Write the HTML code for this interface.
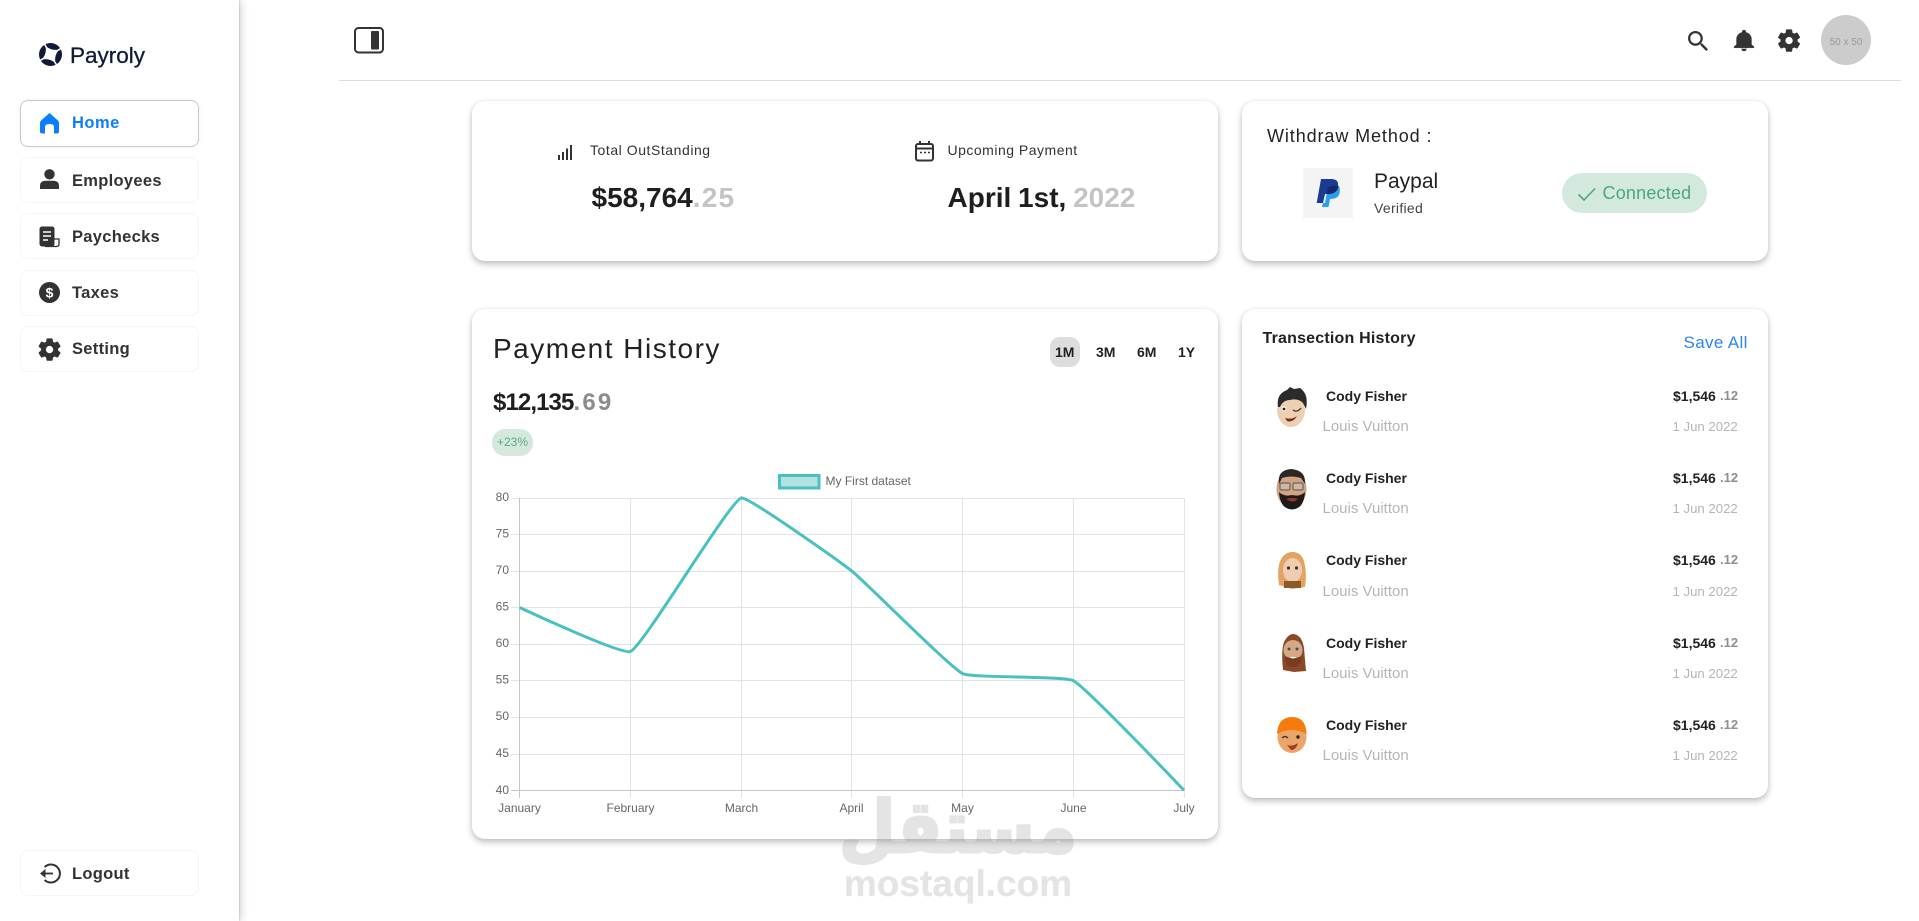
<!DOCTYPE html>
<html lang="en"><head><meta charset="utf-8"><title>Payroly</title>
<style>
*{box-sizing:border-box;margin:0;padding:0}
html,body{width:1919px;height:921px;overflow:hidden;background:#fff;font-family:"Liberation Sans",sans-serif;color:#222}
.a{position:absolute}
.t{position:absolute;white-space:nowrap;line-height:20px;height:20px}
.side{left:0;top:0;width:239px;height:921px;background:#fff;box-shadow:1px 0 1px rgba(0,0,0,.12),3px 0 8px rgba(0,0,0,.14)}
.nav{left:20px;width:179px;background:#fff;border:1px solid #f5f5f5;border-radius:8px}
.nav.on{border:1px solid #c8c8c8;box-shadow:0 0 5px rgba(0,0,0,.05)}
.nt{left:72px;font-size:16.5px;font-weight:700;color:#333;letter-spacing:.3px}
.card{background:#fff;border-radius:13px;box-shadow:0 3px 7px rgba(0,0,0,.26),0 0 3px rgba(0,0,0,.06)}
.b{font-weight:700}
.n{left:1326px;font-size:14px;font-weight:700;color:#222}
.s{left:1322.5px;font-size:15px;color:#b5b5b5}
.m{left:1673px;font-size:14px;font-weight:700;color:#222}
.c{left:1720px;font-size:13px;font-weight:700;color:#8f8f8f}
.d{left:1672.5px;font-size:13.2px;color:#b5b5b5}
svg{position:absolute;left:0;top:0;overflow:visible}
</style></head><body>
<div class="a side"></div>
<div class="a" style="left:339px;top:80px;width:1562px;height:1px;background:#dcdcdc"></div>

<div class="a nav on" style="top:100px;height:47px"></div>
<div class="a nav" style="top:157px;height:46px"></div>
<div class="a nav" style="top:213px;height:46px"></div>
<div class="a nav" style="top:270px;height:46px"></div>
<div class="a nav" style="top:326px;height:46px"></div>
<div class="a nav" style="top:850px;height:46px"></div>

<div class="t" style="left:70px;top:46px;font-size:22.5px;color:#101a38;-webkit-text-stroke:.3px #101a38">Payroly</div>
<div class="t nt" style="top:113px;color:#0b7dff;letter-spacing:.5px">Home</div>
<div class="t nt" style="top:171px">Employees</div>
<div class="t nt" style="top:227px">Paychecks</div>
<div class="t nt" style="top:283px">Taxes</div>
<div class="t nt" style="top:339px">Setting</div>
<div class="t nt" style="top:864px">Logout</div>

<div class="a card" style="left:472px;top:101px;width:746px;height:160px"></div>
<div class="a card" style="left:1242px;top:101px;width:526px;height:160px"></div>
<div class="a card" style="left:472px;top:309px;width:746px;height:530px"></div>
<div class="a card" style="left:1242px;top:309px;width:526px;height:489px"></div>

<div class="t" style="left:590px;top:140px;font-size:14px;letter-spacing:.55px;color:#333">Total OutStanding</div>
<div class="t" style="left:947.5px;top:140px;font-size:14px;letter-spacing:.5px;color:#333">Upcoming Payment</div>
<div class="t b" style="left:591.5px;top:188px;font-size:28px;color:#1e1e1e">$58,764<span style="color:#c4c4c4;letter-spacing:1.2px">.25</span></div>
<div class="t b" style="left:947.5px;top:188px;font-size:28px;color:#1e1e1e;word-spacing:-1px">April 1st, <span style="color:#c4c4c4">2022</span></div>

<div class="t" style="left:1267px;top:126px;font-size:18px;letter-spacing:.9px;color:#222">Withdraw Method :</div>
<div class="a" style="left:1303px;top:168px;width:50px;height:50px;background:#f4f4f4"></div>
<div class="t" style="left:1374px;top:172px;font-size:21px;color:#222">Paypal</div>
<div class="t" style="left:1374px;top:198px;font-size:14px;letter-spacing:.3px;color:#444">Verified</div>
<div class="a" style="left:1562px;top:173px;width:145px;height:40px;background:#d4e9de;border-radius:20px"></div>
<div class="t" style="left:1602.5px;top:183px;font-size:18px;letter-spacing:.2px;color:#4aa87e">Connected</div>

<div class="t" style="left:493px;top:339px;font-size:28px;letter-spacing:1.5px;color:#222">Payment History</div>
<div class="a" style="left:1050px;top:337px;width:30px;height:30px;background:#ddd;border-radius:10px"></div>
<div class="t b" style="left:1055px;top:342px;font-size:14px">1M</div>
<div class="t b" style="left:1096px;top:342px;font-size:14px">3M</div>
<div class="t b" style="left:1137px;top:342px;font-size:14px">6M</div>
<div class="t b" style="left:1178px;top:342px;font-size:14px">1Y</div>
<div class="t b" style="left:493px;top:393px;font-size:24px;letter-spacing:-.9px;color:#1e1e1e">$12,135<span style="color:#8c8c8c;letter-spacing:2.2px">.69</span></div>
<div class="a" style="left:492px;top:429px;width:41px;height:27px;background:#d4e9de;border-radius:13px"></div>
<div class="t" style="left:497px;top:432px;font-size:12px;color:#5fa688">+23%</div>

<div class="t b" style="left:1262.5px;top:329px;font-size:16px;letter-spacing:.2px;color:#222">Transection History</div>
<div class="t" style="left:1683.5px;top:333px;font-size:17px;letter-spacing:.35px;color:#2a86f0">Save All</div>

<div class="t n" style="top:386px">Cody Fisher</div><div class="t s" style="top:417px">Louis Vuitton</div><div class="t m" style="top:386px">$1,546</div><div class="t c" style="top:386px">.12</div><div class="t d" style="top:417px">1 Jun 2022</div>
<div class="t n" style="top:468px">Cody Fisher</div><div class="t s" style="top:499px">Louis Vuitton</div><div class="t m" style="top:468px">$1,546</div><div class="t c" style="top:468px">.12</div><div class="t d" style="top:499px">1 Jun 2022</div>
<div class="t n" style="top:550px">Cody Fisher</div><div class="t s" style="top:582px">Louis Vuitton</div><div class="t m" style="top:550px">$1,546</div><div class="t c" style="top:550px">.12</div><div class="t d" style="top:582px">1 Jun 2022</div>
<div class="t n" style="top:633px">Cody Fisher</div><div class="t s" style="top:664px">Louis Vuitton</div><div class="t m" style="top:633px">$1,546</div><div class="t c" style="top:633px">.12</div><div class="t d" style="top:664px">1 Jun 2022</div>
<div class="t n" style="top:715px">Cody Fisher</div><div class="t s" style="top:746px">Louis Vuitton</div><div class="t m" style="top:715px">$1,546</div><div class="t c" style="top:715px">.12</div><div class="t d" style="top:746px">1 Jun 2022</div>

<svg width="1919" height="921" viewBox="0 0 1919 921" xmlns="http://www.w3.org/2000/svg">
<!-- logo -->
<circle cx="50.5" cy="54.5" r="11.5" fill="#101a38"/>
<g transform="translate(50.5 54.5) rotate(15)" fill="#fff" stroke="#fff">
<path d="M-6.5-6.5Q0-3.5 6.5-6.5 3.5 0 6.5 6.5 0 3.5-6.5 6.5-3.5 0-6.5-6.5Z" stroke-width=".5"/>
<path d="M-6-6-9-9M6-6 9-9M6 6 9 9M-6 6-9 9" stroke-width="1.6"/>
</g>
<!-- home -->
<path d="M49.5 113L58 120.5Q59 121.5 59 123V131.5Q59 133.5 57 133.5H54V127Q54 124 49.5 124Q45 124 45 127V133.5H42Q40 133.5 40 131.5V123Q40 121.5 41 120.5Z" fill="#0b7dff"/>
<!-- person -->
<circle cx="49.5" cy="174.3" r="5.2" fill="#333"/><path d="M40 189V186Q40 180.8 46 180.8H53Q59 180.8 59 186V189Z" fill="#333"/>
<!-- paycheck -->
<rect x="39.5" y="226.5" width="15" height="20" rx="2.5" fill="#333"/>
<path d="M43 232H51M43 236H51M43 240H48" stroke="#fff" stroke-width="1.4"/>
<path d="M54 239H59V244Q59 246.5 56.5 246.5H45" fill="none" stroke="#333" stroke-width="1.3"/>
<!-- taxes -->
<circle cx="49.5" cy="292.5" r="10.5" fill="#333"/>
<text x="49.5" y="297.5" text-anchor="middle" font-family="Liberation Sans" font-weight="700" font-size="14" fill="#fff">$</text>
<!-- gears -->
<path transform="translate(36 336) scale(1.13)" fill="#333" stroke="#333" stroke-width=".7" d="M19.14 12.94c.04-.3.06-.61.06-.94 0-.32-.02-.64-.07-.94l2.03-1.58c.18-.14.23-.41.12-.61l-1.92-3.32c-.12-.22-.37-.29-.59-.22l-2.39.96c-.5-.38-1.03-.7-1.62-.94l-.36-2.54c-.04-.24-.24-.41-.48-.41h-3.84c-.24 0-.43.17-.47.41l-.36 2.54c-.59.24-1.13.57-1.62.94l-2.39-.96c-.22-.08-.47 0-.59.22L2.74 8.87c-.12.21-.08.47.12.61l2.03 1.58c-.05.3-.09.63-.09.94s.02.64.07.94l-2.03 1.58c-.18.14-.23.41-.12.61l1.92 3.32c.12.22.37.29.59.22l2.39-.96c.5.38 1.03.7 1.62.94l.36 2.54c.05.24.24.41.48.41h3.84c.24 0 .44-.17.47-.41l.36-2.54c.59-.24 1.13-.56 1.62-.94l2.39.96c.22.08.47 0 .59-.22l1.92-3.32c.12-.22.07-.47-.12-.61l-2.01-1.58zM12 15.6c-1.98 0-3.6-1.62-3.6-3.6s1.62-3.6 3.6-3.6 3.6 1.62 3.6 3.6-1.62 3.6-3.6 3.6z"/>
<path transform="translate(1775.5 27) scale(1.13)" fill="#333" stroke="#333" stroke-width=".7" d="M19.14 12.94c.04-.3.06-.61.06-.94 0-.32-.02-.64-.07-.94l2.03-1.58c.18-.14.23-.41.12-.61l-1.92-3.32c-.12-.22-.37-.29-.59-.22l-2.39.96c-.5-.38-1.03-.7-1.62-.94l-.36-2.54c-.04-.24-.24-.41-.48-.41h-3.84c-.24 0-.43.17-.47.41l-.36 2.54c-.59.24-1.13.57-1.62.94l-2.39-.96c-.22-.08-.47 0-.59.22L2.74 8.87c-.12.21-.08.47.12.61l2.03 1.58c-.05.3-.09.63-.09.94s.02.64.07.94l-2.03 1.58c-.18.14-.23.41-.12.61l1.92 3.32c.12.22.37.29.59.22l2.39-.96c.5.38 1.03.7 1.62.94l.36 2.54c.05.24.24.41.48.41h3.84c.24 0 .44-.17.47-.41l.36-2.54c.59-.24 1.13-.56 1.62-.94l2.39.96c.22.08.47 0 .59-.22l1.92-3.32c.12-.22.07-.47-.12-.61l-2.01-1.58zM12 15.6c-1.98 0-3.6-1.62-3.6-3.6s1.62-3.6 3.6-3.6 3.6 1.62 3.6 3.6-1.62 3.6-3.6 3.6z"/>
<!-- logout -->
<path d="M44.6 867.1A9 9 0 1 1 44.6 879.9" fill="none" stroke="#333" stroke-width="2"/>
<path d="M44 873.5H53" stroke="#333" stroke-width="1.8"/><path d="M40 873.5L45.5 869V878Z" fill="#333"/>
<!-- toggle -->
<rect x="355" y="28" width="28" height="24.5" rx="3.5" fill="none" stroke="#333" stroke-width="2"/>
<rect x="371" y="31" width="8" height="18.5" rx="1" fill="#333"/>
<!-- search / bell -->
<path transform="translate(1684.6 27.6) scale(1.14)" fill="#333" d="M15.5 14h-.79l-.28-.27C15.41 12.59 16 11.11 16 9.5 16 5.91 13.09 3 9.5 3S3 5.91 3 9.5 5.91 16 9.5 16c1.61 0 3.09-.59 4.23-1.57l.27.28v.79l5 4.99L20.49 19l-4.99-5zm-6 0C7.01 14 5 11.99 5 9.5S7.01 5 9.5 5 14 7.01 14 9.5 11.99 14 9.5 14z"/>
<path transform="translate(1729 27.3) scale(1.25 1.08)" fill="#333" stroke="#333" stroke-width=".3" d="M12 22c1.1 0 2-.9 2-2h-4c0 1.1.9 2 2 2zm6-6v-5c0-3.07-1.63-5.64-4.5-6.32V4c0-.83-.67-1.5-1.5-1.5s-1.5.67-1.5 1.5v.68C7.64 5.36 6 7.92 6 11v5l-2 2v1h16v-1l-2-2z"/>
<circle cx="1846" cy="40" r="25" fill="#ccc"/>
<text x="1846" y="45" text-anchor="middle" font-family="Liberation Sans" font-size="10" fill="#999">50 x 50</text>
<!-- signal -->
<path d="M559 160V155M563 160V152M567 160V148.5M571 160V145" stroke="#333" stroke-width="2" fill="none"/>
<!-- calendar -->
<rect x="916" y="144" width="17" height="16.5" rx="2" fill="none" stroke="#333" stroke-width="2"/>
<path d="M920 141V145M929 141V145M916 148.5H933" stroke="#333" stroke-width="2" fill="none"/>
<path d="M920 152.5H922M924 152.5H926M928 152.5H930" stroke="#333" stroke-width="1.6"/>
<!-- paypal -->
<path d="M1321 179H1331Q1339 179 1338 186Q1337 194 1328 194H1325L1323 203H1316.7Z" fill="#1b3a92"/>
<path d="M1338.6 185.5Q1341 190 1339 195Q1337 199 1330 199L1328.5 207H1322L1323 203H1325L1326.6 194H1329Q1337 194 1338.6 185.5Z" fill="#2a9df0"/>
<path d="M1326.6 194H1329Q1337 194 1338.6 186Q1333 185 1328 187Z" fill="#15286b"/>
<!-- check -->
<path d="M1578.5 194.5L1584 200L1595 188.5" fill="none" stroke="#4aa87e" stroke-width="1.6"/>

<!-- legend -->
<rect x="779.5" y="475.5" width="39.5" height="12.5" fill="#b2e2e2" stroke="#4bc0c0" stroke-width="3"/>
<text x="825.5" y="485" font-family="Liberation Sans" font-size="12" fill="#666">My First dataset</text>

<!-- chart grid -->
<g stroke="#e3e3e3" stroke-width="1" shape-rendering="crispEdges" fill="none">
<path d="M511 498.5H1184M511 534.5H1184M511 571.5H1184M511 607.5H1184M511 644.5H1184M511 680.5H1184M511 717.5H1184M511 754.5H1184"/>
<path d="M630.5 498V798M741.5 498V798M851.5 498V798M962.5 498V798M1073.5 498V798M1184.5 498V798"/>
</g>
<g stroke="#c6c6c6" stroke-width="1" shape-rendering="crispEdges" fill="none">
<path d="M519.5 498V798M511 790.5H1184"/>
</g>
<g font-family="Liberation Sans" font-size="12" fill="#666" text-anchor="end">
<text x="509" y="501">80</text><text x="509" y="537.5">75</text><text x="509" y="574">70</text><text x="509" y="610.5">65</text><text x="509" y="647">60</text><text x="509" y="683.5">55</text><text x="509" y="720">50</text><text x="509" y="757">45</text><text x="509" y="794">40</text>
</g>
<g font-family="Liberation Sans" font-size="12" fill="#666" text-anchor="middle">
<text x="519.5" y="812">January</text><text x="630.5" y="812">February</text><text x="741.5" y="812">March</text><text x="851.5" y="812">April</text><text x="962.5" y="812">May</text><text x="1073.5" y="812">June</text><text x="1184" y="812">July</text>
</g>
<path d="M519.7 607.5C519.7 607.5 622 655.6 630.6 651.4C644.2 644.7 728.4 502.6 741.4 497.9C750.5 497.9 841.6 563 852 571.2C863.8 580.5 949.9 667.3 962.7 673.6C972.1 678.2 1064.2 675.8 1073.4 680.7C1086.3 687.5 1184 790.3 1184 790.3" fill="none" stroke="#4bc0c0" stroke-width="3"/>

<!-- avatars -->
<g>
<ellipse cx="1291" cy="410" rx="14" ry="17" fill="#efcfb2"/>
<path d="M1278 407Q1276 394 1287 390L1290 387L1294 389L1300 388Q1309 394 1306 409L1303 403Q1298 398 1290 400Q1283 400 1280 407Z" fill="#2b2b2b"/>
<circle cx="1284" cy="409" r="2.4" fill="#fff"/><circle cx="1284" cy="409" r="1.4" fill="#222"/>
<path d="M1293 410Q1297 413 1301 408" fill="none" stroke="#333" stroke-width="1.2"/>
<path d="M1285 418Q1292 420 1297 416Q1293 423 1287 421Z" fill="#7a2a20"/>
</g>
<g>
<ellipse cx="1291.5" cy="489" rx="15" ry="19" fill="#d0a482"/>
<path d="M1279 484Q1277 470 1291 469Q1306 470 1305 484L1301 478Q1291 475 1282 478Z" fill="#2e2622"/>
<path d="M1279 492Q1280 509 1292 509.5Q1304 509 1305 492Q1300 497 1292 495Q1284 497 1279 492Z" fill="#1f1a18"/>
<rect x="1280" y="483" width="10" height="7" rx="1.5" fill="#cdb7a6" stroke="#6b6660" stroke-width="1.2"/>
<rect x="1293" y="483" width="10" height="7" rx="1.5" fill="#cdb7a6" stroke="#6b6660" stroke-width="1.2"/>
<path d="M1286 499Q1292 497 1298 499Q1293 504 1286 499Z" fill="#8c3a30"/>
</g>
<g>
<path d="M1279 585Q1277 572 1279.5 563Q1283 552 1292.5 552Q1302 552 1304.5 563Q1307 575 1305 587L1292 589Z" fill="#e3a463"/>
<ellipse cx="1292.5" cy="570" rx="9.5" ry="12" fill="#f1cdb0"/>
<path d="M1284 581H1301V588H1284Z" fill="#8a5a28"/>
<circle cx="1288.5" cy="568" r="1.6" fill="#334"/><circle cx="1296.5" cy="568" r="1.6" fill="#334"/>
</g>
<g>
<path d="M1283 670Q1281 650 1284 642Q1288 634 1293.5 634Q1302 635 1304 648Q1305 660 1306 671L1294 672Z" fill="#8a4a2a"/>
<ellipse cx="1293" cy="650" rx="9.5" ry="10" fill="#d6a884"/>
<path d="M1285 656Q1293 660 1302 656Q1301 668 1293 667Q1285 667 1285 656Z" fill="#7a3d1f"/>
<circle cx="1289" cy="649" r="1.5" fill="#356"/><circle cx="1297" cy="649" r="1.5" fill="#356"/>
<path d="M1289 657Q1293 660 1297 657Z" fill="#fff"/>
</g>
<g>
<ellipse cx="1292" cy="737" rx="14.5" ry="16" fill="#e9a56c"/>
<path d="M1277 734Q1278 717 1292 717Q1306 717 1306.5 734Q1292 726 1277 734Z" fill="#f57c0c"/>
<path d="M1282 738Q1285 735 1288 738" fill="none" stroke="#432" stroke-width="1.5"/>
<circle cx="1298" cy="737" r="1.7" fill="#321"/>
<path d="M1287 745Q1292 747 1298 743Q1296 750 1291 750Z" fill="#a33a22"/>
</g>

<!-- watermark -->
<g fill="#8a8a8a" stroke="#8a8a8a" opacity=".22">
<text x="958" y="896" text-anchor="middle" font-family="Liberation Sans" font-weight="700" font-size="37" stroke-width=".3">mostaql.com</text>
<text x="839" y="852" font-family="DejaVu Sans" font-weight="700" font-size="72" stroke-width="3" direction="rtl" style="unicode-bidi:bidi-override" textLength="238" lengthAdjust="spacingAndGlyphs" text-anchor="end">مستقل</text>
</g>
</svg>
</body></html>
